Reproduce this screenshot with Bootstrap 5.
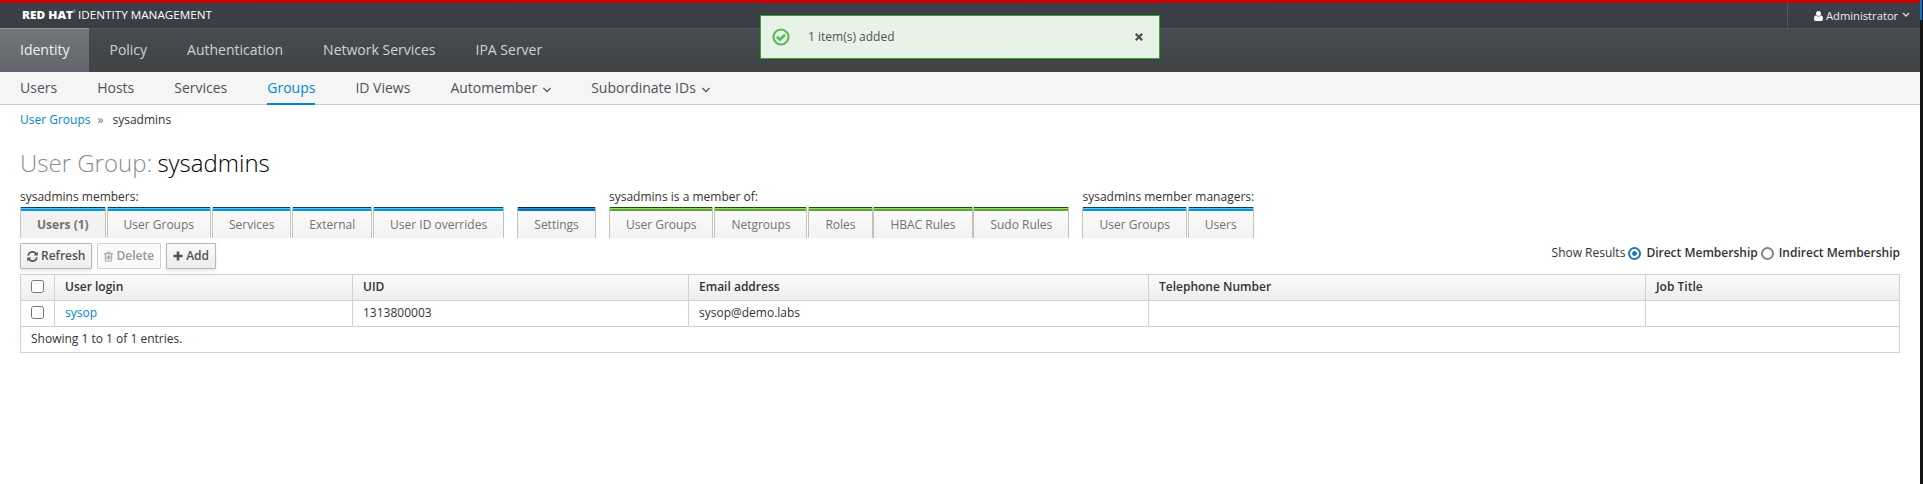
<!DOCTYPE html>
<html lang="en">
<head>
<meta charset="utf-8">
<title>Identity Management</title>
<meta name="viewport" content="width=device-width, initial-scale=1">
<link href="https://cdn.jsdelivr.net/npm/bootstrap@5.3.0/dist/css/bootstrap.min.css" rel="stylesheet">
<style>
body{font-family:"Open Sans","Noto Sans",sans-serif;font-size:12px;line-height:20px;color:#333;background:#fff;height:484px;overflow:hidden}
a{color:#0088ce;text-decoration:none}
svg{display:block;flex:none}
.shell{width:1920px;height:484px}
.edge{width:3px;background:linear-gradient(to right,#0078d7 2px,#151515 2px) top/3px 20px no-repeat,#151515}
.topbar{height:28px;border-top:3px solid #c00;background:linear-gradient(#3b3f47,#393d44)}
.brandmark{padding-left:22px}
.account{border-left:1px solid #53565b;width:133px;height:25px;color:#eee;padding-left:26px;font-size:11.2px}
.mainnav{height:44px;border-top:1px solid #53565b;background:linear-gradient(#474c50,#3f4346);font-size:14px}
.mainnav .nav-link{color:#d1d1d1;padding:0 20px;line-height:41px;height:44px;margin-top:-1px;border-top:1px solid transparent}
.mainnav .active{color:#f1f1f1;background:linear-gradient(#72757a,#62656a);border-top-color:#949699}
.subnav{height:33px;background:#f5f5f5;border-bottom:1px solid #ccc;font-size:14px;padding-left:20px;gap:40px}
.subnav .nav-link{color:#4d5258;padding:0 0 2px;height:33px;display:flex;align-items:center}
.subnav .nav-link svg{margin:4px 0 0 6px}
.subnav .active{color:#0088ce;border-bottom:2px solid #0088ce;padding-bottom:0}
.crumbs{padding-top:5px;height:30px}
h1{font-size:24px;font-weight:300;line-height:28px;color:#8b8d8f;margin:14px 0 0}
h1 strong{font-weight:300;color:#000}
.facets{margin-top:10px;gap:13.2px}
.facet-label{height:20px;line-height:20px}
.facet-tabs{gap:.9px}
.facet-tabs a{display:block;height:31px;line-height:28px;padding:3px 16px 0;border:solid #c8c1b8;border-width:0 1px;color:#727272;background:linear-gradient(var(--d) 1px,var(--l) 1px 2px,var(--m) 2px 4px,transparent 4px),linear-gradient(#fcfcfc,#f2f2f2);white-space:nowrap;padding-top:4px}
.f-blue{--d:#00436d;--l:#66c2e8;--m:#009bda}
.f-navy{--d:#002a50;--l:#3b8fd0;--m:#0073bb}
.f-green{--d:#154f00;--l:#9fd67c;--m:#58ad2b}
.facet-tabs a.active{font-weight:700;background:linear-gradient(var(--d) 1px,var(--l) 1px 2px,var(--m) 2px 4px,transparent 4px),#f2f2f2}
.tools{height:36px;padding-top:5px}
.btn-pf{height:26px;padding:0 6px;font-size:12px;font-weight:600;line-height:22px;color:#4d5258;border:1px solid #b7b7b7;border-radius:1px;background:linear-gradient(#fafafa,#ededed);box-shadow:0 2px 3px rgba(3,3,3,.1);display:flex;align-items:center;gap:3px}
.btn-pf.off{color:#969696;background:#fafafa;border-color:#d1d1d1;box-shadow:none}
.results{height:16px;margin-top:2px}
.results b{font-weight:600}
.results input{appearance:none;margin:0;width:13px;height:13px;border:2px solid #858585;border-radius:50%;background:#fff;flex:none}
.results input:checked{border-color:#1f7ab5;background:radial-gradient(circle,#1f7ab5 2px,#fff 2.7px)}
.grid{width:1880px;table-layout:fixed;border-collapse:collapse;margin:0}
.grid th,.grid td{border:1px solid #d1d1d1;height:26px;padding:0 10px 2px;line-height:20px;font-weight:400;vertical-align:middle}
.grid th{font-weight:600}
.grid thead tr{background:linear-gradient(#fafafa,#ededed)}
.grid input{display:block;margin:0;width:13px;height:13px}
.notice{position:absolute;left:760px;top:15px;width:400px;height:44px;background:#e7f3e7;border:1px solid #3f9c35;padding:0 16px 0 11px;color:#4d5258}
</style>
</head>
<body class="d-flex">
<div class="shell">
  <header class="topbar d-flex justify-content-between">
    <div class="brandmark"><svg width="200" height="25" fill="#fff" font-family="Open Sans"><text x="0" y="16" font-size="11.2" font-weight="800" textLength="51" lengthAdjust="spacingAndGlyphs">RED HAT</text><text x="51" y="10" font-size="3">®</text><text x="56" y="16" font-size="11.2" font-weight="500" textLength="134" lengthAdjust="spacingAndGlyphs">IDENTITY MANAGEMENT</text></svg></div>
    <div class="account d-flex align-items-center">
      <svg width="9" height="10" viewBox="0 0 9 10" fill="#fff"><circle cx="4.5" cy="2.6" r="2.5"/><path d="M2 4.2C.6 4.6 0 6 0 7.800 0 9.200.6 10 1.600 10h5.800C8.400 10 9 9.200 9 7.800 9 6 8.400 4.600 7 4.200 6 6 3 6 2 4.200z"/></svg>
      <span style="margin-left:3px">Administrator</span>
      <svg width="8" height="6" style="margin:-1px 0 0 4px" viewBox="0 0 8 6" fill="none" stroke="#ddd" stroke-width="1.300"><path d="M1 1l3 3 3-3"/></svg>
    </div>
  </header>
  <nav class="mainnav nav flex-nowrap">
    <a class="nav-link active" href="#">Identity</a><a class="nav-link" href="#">Policy</a><a class="nav-link" href="#">Authentication</a><a class="nav-link" href="#">Network Services</a><a class="nav-link" href="#">IPA Server</a>
  </nav>
  <nav class="subnav nav flex-nowrap">
    <a class="nav-link" href="#">Users</a><a class="nav-link" href="#">Hosts</a><a class="nav-link" href="#">Services</a><a class="nav-link active" href="#">Groups</a><a class="nav-link" href="#">ID Views</a>
    <a class="nav-link" href="#">Automember<svg width="8" height="6" viewBox="0 0 8 6" fill="none" stroke="#4d5258" stroke-width="1.300"><path d="M.4 1L4 4.600 7.600 1"/></svg></a>
    <a class="nav-link" href="#">Subordinate IDs<svg width="8" height="6" viewBox="0 0 8 6" fill="none" stroke="#4d5258" stroke-width="1.300"><path d="M.4 1L4 4.600 7.600 1"/></svg></a>
  </nav>
  <main style="padding:0 20px">
    <div class="crumbs d-flex"><a href="#">User Groups</a><span class="text-secondary" style="margin:0 9px 0 7px">»</span><span>sysadmins</span></div>
    <h1>User Group: <strong style="margin-left:-1px">sysadmins</strong></h1>
    <div class="facets d-flex">
      <section><div class="facet-label">sysadmins members:</div><div class="facet-tabs f-blue d-flex"><a class="active" href="#">Users (1)</a><a href="#">User Groups</a><a href="#">Services</a><a href="#">External</a><a href="#">User ID overrides</a></div></section>
      <section><div class="facet-label"></div><div class="facet-tabs f-navy d-flex"><a href="#">Settings</a></div></section>
      <section><div class="facet-label">sysadmins is a member of:</div><div class="facet-tabs f-green d-flex"><a href="#">User Groups</a><a href="#">Netgroups</a><a href="#">Roles</a><a href="#">HBAC Rules</a><a href="#">Sudo Rules</a></div></section>
      <section><div class="facet-label">sysadmins member managers:</div><div class="facet-tabs f-blue d-flex"><a href="#">User Groups</a><a href="#">Users</a></div></section>
    </div>
    <div class="tools d-flex justify-content-between">
      <div class="d-flex" style="gap:5px">
        <button class="btn-pf"><svg width="11" height="11" viewBox="0 0 12 12" fill="none" stroke="currentColor" stroke-width="1.800"><path d="M1.200 5A4.800 4.800 0 0 1 9.800 3M10.800 7A4.800 4.800 0 0 1 2.200 9"/><path fill="currentColor" stroke="none" d="M11.700.5v4.300H7.400zM.3 11.500V7.200h4.300z"/></svg>Refresh</button>
        <button class="btn-pf off" disabled><svg width="9" height="11" viewBox="0 0 10 11" fill="none" stroke="currentColor"><path d="M0 2.500h10M3 2.500l.6-1.700h2.800l.6 1.700M1.500 2.500v7.300q0 .7.700.7h5.600q.7 0 .7-.7V2.500M3.500 4.500v4M5 4.500v4M6.500 4.500v4"/></svg>Delete</button>
        <button class="btn-pf"><svg width="10" height="10" viewBox="0 0 10 10" fill="currentColor"><path d="M3.700.5h2.600v3.200h3.200v2.600H6.300v3.200H3.700V6.300H.5V3.700h3.200z"/></svg>Add</button>
      </div>
      <div class="results d-flex align-items-center"><span>Show Results</span><input style="margin-left:3px" type="radio" name="m" checked><b style="margin-left:5px">Direct Membership</b><input style="margin-left:3px" type="radio" name="m"><b style="margin-left:5px">Indirect Membership</b></div>
    </div>
    <table class="grid">
      <colgroup><col style="width:34px"><col style="width:298px"><col style="width:336px"><col style="width:460px"><col style="width:497px"><col></colgroup>
      <thead><tr><th><input type="checkbox"></th><th>User login</th><th>UID</th><th>Email address</th><th>Telephone Number</th><th>Job Title</th></tr></thead>
      <tbody><tr><td><input type="checkbox"></td><td><a href="#">sysop</a></td><td>1313800003</td><td>sysop@demo.labs</td><td></td><td></td></tr>
      <tr><td colspan="6">Showing 1 to 1 of 1 entries.</td></tr></tbody>
    </table>
  </main>
</div>
<div class="edge"></div>
<div class="notice d-flex align-items-center" role="alert">
  <svg width="18" height="18" viewBox="0 0 18 18" fill="none" stroke="#5cb85c"><circle cx="9" cy="9" r="7.500" stroke-width="2.200"/><path stroke-width="2.700" d="M5 8.700l3 3 5-5"/></svg>
  <span style="margin-left:18px">1 item(s) added</span>
  <svg class="ms-auto" width="8" height="8" viewBox="0 0 8 8" stroke="#4d4d4d" stroke-width="2.200"><path d="M.8.800l6.400 6.400M7.200.800L.8 7.200"/></svg>
</div>
<script src="https://cdn.jsdelivr.net/npm/bootstrap@5.3.0/dist/js/bootstrap.bundle.min.js"></script>
</body>
</html>
